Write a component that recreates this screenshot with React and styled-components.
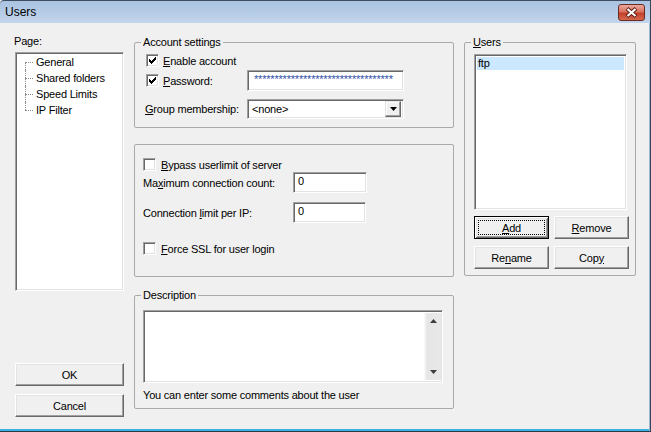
import React from "react";
import styled, { createGlobalStyle, css } from "styled-components";

const GlobalStyle = createGlobalStyle`
  html, body { margin: 0; padding: 0; }
  body {
    background: #f0f0f0;
    font-family: "Liberation Sans", Arial, sans-serif;
    font-size: 11px;
    letter-spacing: -0.2px;
    color: #000;
  }
  * { box-sizing: border-box; }
`;

const sunken = css`
  border: 1px solid;
  border-color: #a0a0a0 #ffffff #ffffff #a0a0a0;
  box-shadow: inset 1px 1px 0 #696969, inset -1px -1px 0 #e3e3e3;
  background: #fff;
`;

const Window = styled.div`
  width: 651px;
  height: 432px;
  display: flex;
  flex-direction: column;
  background: #f0f0f0;
  border-right: 1px solid #34465c;
  border-bottom: 1px solid #2b3a4a;
  box-shadow: inset -1px 0 0 #9fb6d3, inset 0 -2px 0 #3ab4de;
  overflow: hidden;
`;

const TitleBar = styled.div`
  flex: none;
  height: 23px;
  display: flex;
  align-items: flex-start;
  justify-content: space-between;
  padding: 0 5px 0 5px;
  border-top: 1px solid #3d4d60;
  border-top-left-radius: 4px;
  background: linear-gradient(#a9c3e1, #c2d5ec);
`;

const Title = styled.div`
  font-size: 12px;
  letter-spacing: 0;
  line-height: 23px;
`;

const CloseButton = styled.div`
  margin-top: 3px;
  width: 27px;
  height: 17px;
  border: 1px solid #6b2a20;
  border-radius: 3px;
  background: linear-gradient(#eba99f 0%, #d9725f 45%, #c4402a 55%, #d36a4f 100%);
  display: flex;
  align-items: center;
  justify-content: center;
`;

const Body = styled.div`
  flex: 1;
  display: flex;
  gap: 10px;
  padding: 12px 0 0 15px;
`;

const Column = styled.div`
  display: flex;
  flex-direction: column;
  width: ${(p) => p.$w}px;
  flex: none;
`;

const PageLabel = styled.div`
  line-height: 13px;
  margin-bottom: 4px;
  margin-left: -1px;
`;

const TreeBox = styled.div`
  ${sunken};
  height: 239px;
  padding: 1px 0 0 1px;
`;

const TreeItem = styled.div`
  position: relative;
  height: 16px;
  line-height: 16px;
  padding-left: 19px;
  white-space: nowrap;
  &::before {
    content: "";
    position: absolute;
    left: 8px;
    top: 8px;
    width: 8px;
    border-top: 1px dotted #8a8a8a;
  }
  &::after {
    content: "";
    position: absolute;
    left: 8px;
    top: 0;
    bottom: 0;
    border-left: 1px dotted #8a8a8a;
  }
  &:first-child::after { top: 8px; }
  &:last-child::after { bottom: 8px; }
`;

const Button = styled.button`
  position: relative;
  width: ${(p) => p.$w || 75}px;
  height: 23px;
  margin-top: ${(p) => p.$mt || 0}px;
  padding: 0;
  font-family: inherit;
  font-size: 11px;
  letter-spacing: -0.2px;
  color: #000;
  background: #f0f0f0;
  border: 1px solid;
  border-color: #ffffff #696969 #696969 #ffffff;
  box-shadow: inset -1px -1px 0 #a0a0a0, inset 1px 1px 0 #e3e3e3;
  ${(p) =>
    p.$primary &&
    css`
      border: 1px solid #000;
      box-shadow: inset 1px 1px 0 #fff, inset -1px -1px 0 #696969,
        inset 2px 2px 0 #e3e3e3, inset -2px -2px 0 #a0a0a0;
      &::after {
        content: "";
        position: absolute;
        inset: 3px;
        border: 1px dotted #000;
      }
    `}
`;

const Group = styled.fieldset`
  margin: ${(p) => p.$mt || 0}px 0 0 0;
  padding: 0;
  border: 1px solid #a9a9a9;
  border-radius: 2px;
  height: ${(p) => p.$h}px;
  min-width: 0;
`;

const Legend = styled.legend`
  padding: 0 2px;
  margin-left: 6px;
  line-height: 14px;
`;

const GroupBody = styled.div`
  padding-left: ${(p) => p.$pl || 8}px;
`;

const Key = styled.span`
  text-decoration: underline;
`;

const CheckRow = styled.div`
  display: flex;
  align-items: center;
  gap: ${(p) => p.$gap || 4}px;
  height: ${(p) => p.$h || 13}px;
  margin-top: ${(p) => p.$mt || 0}px;
  margin-left: ${(p) => p.$ml || 0}px;
`;

const FieldRow = styled.div`
  display: flex;
  align-items: center;
  height: ${(p) => p.$h || 21}px;
  margin-top: ${(p) => p.$mt || 0}px;
`;

const FieldLabel = styled.div`
  width: ${(p) => p.$w}px;
  flex: none;
  display: flex;
  align-items: center;
  gap: 4px;
`;

const CheckBox = styled.span`
  ${sunken};
  width: 13px;
  height: 13px;
  flex: none;
  display: flex;
  align-items: center;
  justify-content: center;
  margin-left: ${(p) => p.$ml || 0}px;
`;

const TextBox = styled.div`
  ${sunken};
  width: ${(p) => p.$w}px;
  height: ${(p) => p.$h || 21}px;
  padding: 1px 0 0 ${(p) => p.$pl || 4}px;
  line-height: 14px;
  overflow: hidden;
  white-space: nowrap;
  color: ${(p) => p.$color || "#000"};
`;

const Select = styled.div`
  ${sunken};
  width: 157px;
  height: 20px;
  display: flex;
  align-items: center;
  justify-content: space-between;
  padding: 0 2px 0 4px;
`;

const DropButton = styled.div`
  width: 16px;
  height: 16px;
  background: #f0f0f0;
  border: 1px solid;
  border-color: #e3e3e3 #696969 #696969 #e3e3e3;
  box-shadow: inset -1px -1px 0 #a0a0a0, inset 1px 1px 0 #fff;
  display: flex;
  align-items: center;
  justify-content: center;
`;

const TextArea = styled.div`
  ${sunken};
  width: 300px;
  height: 73px;
  margin-top: 8px;
  display: flex;
  justify-content: flex-end;
  padding: 2px 1px 2px 2px;
`;

const ScrollBar = styled.div`
  width: 17px;
  background: linear-gradient(90deg, #f4f4f4 0, #e6e6e6 2px, #e8e8e8 100%);
  border-left: 1px solid #f8f8f8;
  display: flex;
  flex-direction: column;
  justify-content: space-between;
  align-items: center;
  padding: 6px 0 6px;
`;

const HelpText = styled.div`
  line-height: 13px;
  margin-top: 6px;
`;

const ListBox = styled.div`
  ${sunken};
  width: 153px;
  height: 156px;
  margin-top: 5px;
  padding: 2px;
`;

const ListItem = styled.div`
  height: 13px;
  line-height: 13px;
  padding-left: 1px;
  background: ${(p) => (p.$selected ? "#cce8ff" : "transparent")};
`;

const ButtonGrid = styled.div`
  display: grid;
  grid-template-columns: 75px 75px;
  column-gap: 5px;
  row-gap: 7px;
  margin-top: 6px;
`;

const Check = () => (
  <svg width="7" height="7" viewBox="0 0 7 7">
    <path
      d="M0 2h1v1h1v1h1v-1h1v-1h1v-1h1v-1h1v3h-1v1h-1v1h-1v1h-1v1h-1v-1h-1v-1h-1v-1h-1z"
      fill="#000"
    />
  </svg>
);

const Arrow = ({ up, color = "#000" }) => (
  <svg width="7" height="4" viewBox="0 0 7 4">
    <path d={up ? "M3.5 0 L7 4 L0 4 Z" : "M0 0 L7 0 L3.5 4 Z"} fill={color} />
  </svg>
);

const CloseIcon = () => (
  <svg width="13" height="11" viewBox="0 0 13 11">
    <path d="M2 1.5 L11 9.5 M11 1.5 L2 9.5" stroke="#5a1a10" strokeWidth="4" />
    <path d="M2.5 2 L10.5 9 M10.5 2 L2.5 9" stroke="#fff" strokeWidth="2.2" />
  </svg>
);

export default function App() {
  return (
    <>
      <GlobalStyle />
      <Window>
        <TitleBar>
          <Title>Users</Title>
          <CloseButton>
            <CloseIcon />
          </CloseButton>
        </TitleBar>
        <Body>
          <Column $w={109}>
            <PageLabel>Page:</PageLabel>
            <TreeBox>
              <TreeItem>General</TreeItem>
              <TreeItem>Shared folders</TreeItem>
              <TreeItem>Speed Limits</TreeItem>
              <TreeItem>IP Filter</TreeItem>
            </TreeBox>
            <Button $w={109} $mt={72}>OK</Button>
            <Button $w={109} $mt={8}>Cancel</Button>
          </Column>

          <Column $w={320}>
            <Group $h={93}>
              <Legend>Account settings</Legend>
              <GroupBody $pl={10}>
                <CheckRow $mt={5} $ml={1}>
                  <CheckBox><Check /></CheckBox>
                  <span><Key>E</Key>nable account</span>
                </CheckRow>
                <FieldRow $mt={3}>
                  <FieldLabel $w={102}>
                    <CheckBox $ml={1}><Check /></CheckBox>
                    <span><Key>P</Key>assword:</span>
                  </FieldLabel>
                  <TextBox $w={157} $pl={6} $color="#2f4fa8">
                    {"*".repeat(34)}
                  </TextBox>
                </FieldRow>
                <FieldRow $mt={8} $h={20}>
                  <FieldLabel $w={102}>
                    <span><Key>G</Key>roup membership:</span>
                  </FieldLabel>
                  <Select>
                    <span>&lt;none&gt;</span>
                    <DropButton><Arrow /></DropButton>
                  </Select>
                </FieldRow>
              </GroupBody>
            </Group>

            <Group $h={133} $mt={16}>
              <GroupBody>
                <CheckRow $mt={13} $gap={5}>
                  <CheckBox />
                  <span><Key>B</Key>ypass userlimit of server</span>
                </CheckRow>
                <FieldRow $mt={1}>
                  <FieldLabel $w={150}>
                    <span>Ma<Key>x</Key>imum connection count:</span>
                  </FieldLabel>
                  <TextBox $w={74}>0</TextBox>
                </FieldRow>
                <FieldRow $mt={9}>
                  <FieldLabel $w={150}>
                    <span>Connection <Key>l</Key>imit per IP:</span>
                  </FieldLabel>
                  <TextBox $w={73}>0</TextBox>
                </FieldRow>
                <CheckRow $mt={19} $gap={5}>
                  <CheckBox />
                  <span><Key>F</Key>orce SSL for user login</span>
                </CheckRow>
              </GroupBody>
            </Group>

            <Group $h={121} $mt={11}>
              <Legend>Description</Legend>
              <GroupBody>
                <TextArea>
                  <ScrollBar>
                    <Arrow up color="#3c3c3c" />
                    <Arrow color="#3c3c3c" />
                  </ScrollBar>
                </TextArea>
                <HelpText>You can enter some comments about the user</HelpText>
              </GroupBody>
            </Group>
          </Column>

          <Column $w={172}>
            <Group $h={241}>
              <Legend><Key>U</Key>sers</Legend>
              <GroupBody $pl={9}>
                <ListBox>
                  <ListItem $selected>ftp</ListItem>
                </ListBox>
                <ButtonGrid>
                  <Button $primary><Key>A</Key>dd</Button>
                  <Button><Key>R</Key>emove</Button>
                  <Button>Re<Key>n</Key>ame</Button>
                  <Button>Cop<Key>y</Key></Button>
                </ButtonGrid>
              </GroupBody>
            </Group>
          </Column>
        </Body>
      </Window>
    </>
  );
}
